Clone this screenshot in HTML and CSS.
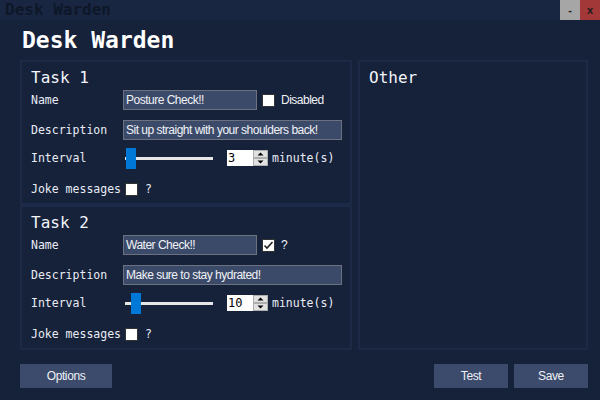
FILE: index.html
```html
<!DOCTYPE html>
<html>
<head>
<meta charset="utf-8">
<link rel="stylesheet" href="styles.css">
</head>
<body>
<div class="titlebar">
  <div class="wintitle">Desk Warden</div>
  <div class="winbtn minbtn">-</div>
  <div class="winbtn closebtn">x</div>
</div>
<h1 class="heading">Desk Warden</h1>
<div class="main">
  <div class="tasks">
    <section class="panel task">
      <div class="ptitle">Task 1</div>
      <div class="row">
        <span class="label">Name</span>
        <div class="field name">Posture Check!!</div>
        <span class="cb"></span>
        <span class="side">Disabled</span>
      </div>
      <div class="row">
        <span class="label">Description</span>
        <div class="field desc">Sit up straight with your shoulders back!</div>
      </div>
      <div class="row r3">
        <span class="label">Interval</span>
        <div class="slider"><div class="track"></div><div class="thumb" style="left:1px"></div></div>
        <div class="num"><span class="numval">3</span><div class="spin"><span class="up"><svg width="7" height="4" viewBox="0 0 7 4"><path d="M0.5 3.5 L3.5 0.5 L6.5 3.5Z" fill="#000"/></svg></span><span class="down"><svg width="7" height="4" viewBox="0 0 7 4"><path d="M0.5 0.5 L3.5 3.5 L6.5 0.5Z" fill="#000"/></svg></span></div></div>
        <span class="unit">minute(s)</span>
      </div>
      <div class="row r4">
        <span class="label">Joke messages</span>
        <span class="cb cb-joke"></span>
        <span class="q">?</span>
      </div>
    </section>
    <section class="panel task">
      <div class="ptitle">Task 2</div>
      <div class="row">
        <span class="label">Name</span>
        <div class="field name">Water Check!!</div>
        <span class="cb"><svg width="11" height="11" viewBox="0 0 11 11"><path d="M1.5 5.5 L4 8 L9.5 2" fill="none" stroke="#222" stroke-width="1.6"/></svg></span>
        <span class="side">?</span>
      </div>
      <div class="row">
        <span class="label">Description</span>
        <div class="field desc">Make sure to stay hydrated!</div>
      </div>
      <div class="row r3">
        <span class="label">Interval</span>
        <div class="slider"><div class="track"></div><div class="thumb" style="left:6px"></div></div>
        <div class="num"><span class="numval">10</span><div class="spin"><span class="up"><svg width="7" height="4" viewBox="0 0 7 4"><path d="M0.5 3.5 L3.5 0.5 L6.5 3.5Z" fill="#000"/></svg></span><span class="down"><svg width="7" height="4" viewBox="0 0 7 4"><path d="M0.5 0.5 L3.5 3.5 L6.5 0.5Z" fill="#000"/></svg></span></div></div>
        <span class="unit">minute(s)</span>
      </div>
      <div class="row r4">
        <span class="label">Joke messages</span>
        <span class="cb cb-joke"></span>
        <span class="q">?</span>
      </div>
    </section>
  </div>
  <section class="panel other">
    <div class="ptitle">Other</div>
  </section>
</div>
<div class="footer">
  <div class="btn options">Options</div>
  <div class="spacer"></div>
  <div class="btn small">Test</div>
  <div class="btn small">Save</div>
</div>
</body>
</html>
```
FILE: styles.css
```css
html, body {
  margin: 0;
  padding: 0;
}
body {
  width: 600px;
  height: 400px;
  overflow: hidden;
  background: #16213a;
  font-family: "DejaVu Sans Mono", monospace;
  color: #e8edf5;
}
.titlebar {
  height: 20px;
  background: #182641;
  display: flex;
}
.wintitle {
  flex: 1;
  padding-left: 5px;
  font-weight: bold;
  font-size: 16px;
  line-height: 20px;
  color: #0e1729;
}
.winbtn {
  width: 20px;
  height: 20px;
  display: flex;
  align-items: center;
  justify-content: center;
  font-family: "Liberation Sans", sans-serif;
  font-size: 11px;
  font-weight: bold;
  color: #1a1a1a;
}
.minbtn {
  background: #a6a6a6;
}
.closebtn {
  background: #a23838;
}
.heading {
  margin: 6px 0;
  padding-left: 22px;
  font-size: 23px;
  line-height: 28px;
  font-weight: bold;
  color: #ffffff;
}
.main {
  display: flex;
  gap: 6px;
  padding: 0 12px 0 20px;
  height: 290px;
}
.tasks {
  width: 332px;
  display: flex;
  flex-direction: column;
}
.panel {
  border: 2px solid #1c2a47;
  box-sizing: border-box;
}
.task {
  height: 145px;
}
.other {
  flex: 1;
  height: 290px;
}
.ptitle {
  padding: 9px 0 0 9px;
  height: 23px;
  box-sizing: border-box;
  font-size: 16px;
  line-height: 14px;
  color: #f2f5fa;
}
.row {
  display: flex;
  align-items: center;
  height: 30px;
  padding-left: 9px;
  box-sizing: border-box;
}
.r3 {
  height: 26px;
}
.r4 {
  height: 32px;
  padding-top: 4px;
}
.label {
  width: 92px;
  flex: none;
  font-size: 11.5px;
  white-space: nowrap;
}
.field {
  height: 20px;
  box-sizing: border-box;
  border: 1px solid #6b7181;
  background: #3c4a6a;
  font-family: "Liberation Sans", sans-serif;
  font-size: 12px;
  letter-spacing: -0.5px;
  line-height: 18px;
  padding-left: 2px;
  color: #f0f2f6;
  white-space: nowrap;
  overflow: hidden;
}
.name {
  width: 134px;
}
.desc {
  width: 219px;
}
.cb {
  width: 13px;
  height: 13px;
  flex: none;
  box-sizing: border-box;
  background: #ffffff;
  border: 1px solid #333333;
  margin-left: 5px;
  display: flex;
  align-items: center;
  justify-content: center;
}
.cb-joke {
  margin-left: 2px;
}
.side {
  margin-left: 6px;
  font-family: "Liberation Sans", sans-serif;
  font-size: 12px;
  letter-spacing: -0.5px;
  color: #f0f2f6;
}
.q {
  margin-left: 7px;
  font-size: 11.5px;
}
.slider {
  position: relative;
  width: 88px;
  height: 21px;
  margin-left: 2px;
  flex: none;
}
.track {
  position: absolute;
  left: 0;
  right: 0;
  top: 9px;
  height: 3px;
  background: #e6e6e6;
}
.thumb {
  position: absolute;
  top: 0;
  width: 10px;
  height: 21px;
  background: #0078d7;
}
.num {
  margin-left: 14px;
  width: 41px;
  height: 16px;
  background: #ffffff;
  display: flex;
  flex: none;
}
.numval {
  flex: 1;
  color: #000000;
  font-size: 12px;
  line-height: 16px;
  padding-left: 1px;
}
.spin {
  width: 15px;
  display: flex;
  flex-direction: column;
  background: #f0f0f0;
}
.spin span {
  flex: 1;
  box-sizing: border-box;
  background: #e1e1e1;
  border: 1px solid #adadad;
  display: flex;
  align-items: center;
  justify-content: center;
}
.unit {
  margin-left: 4px;
  font-size: 11.5px;
}
.footer {
  display: flex;
  gap: 6px;
  padding: 14px 12px 0 20px;
}
.btn {
  height: 24px;
  background: #3c4b6b;
  color: #eef0f6;
  font-family: "Liberation Sans", sans-serif;
  font-size: 12px;
  letter-spacing: -0.4px;
  display: flex;
  align-items: center;
  justify-content: center;
}
.options {
  width: 92px;
}
.spacer {
  flex: 1;
}
.small {
  width: 74px;
}
```
